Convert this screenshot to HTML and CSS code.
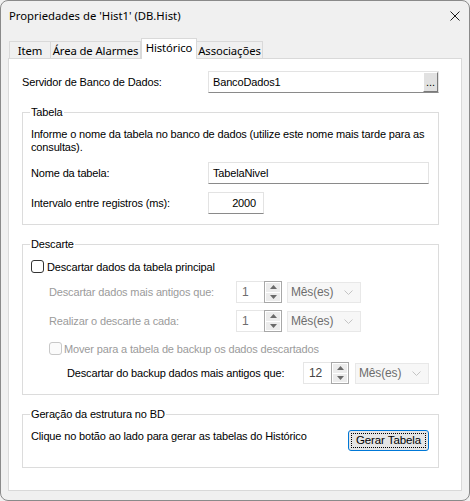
FILE: index.html
```html
<!DOCTYPE html>
<html lang="pt-BR">
<head>
  <meta charset="UTF-8" />
  <meta name="viewport" content="width=device-width, initial-scale=1.0"/>
  <title>Propriedades de 'Hist1' (DB.Hist)</title>
  <link rel="stylesheet" href="styles.css">
</head>
<body>
  <div class="window">
    <div class="titlebar">
      <span class="title">Propriedades de 'Hist1' (DB.Hist)</span>
      <svg class="close" width="10" height="10" viewBox="0 0 10 10"><path d="M0.5 0.5 L9.5 9.5 M9.5 0.5 L0.5 9.5" stroke="#1b1b1b" stroke-width="1" fill="none"/></svg>
    </div>

    <div class="tabs">
      <div class="tab t-item">Item</div>
      <div class="tab t-area">Área de Alarmes</div>
      <div class="tab t-hist active">Histórico</div>
      <div class="tab t-assoc">Associações</div>
    </div>

    <div class="panel">
      <div class="row server">
        <span class="lbl w-server">Servidor de Banco de Dados:</span>
        <div class="textbox fill">
          <span class="tb-text">BancoDados1</span>
          <span class="dots">...</span>
        </div>
      </div>

      <fieldset class="group g-tabela">
        <legend>Tabela</legend>
        <p class="hint">Informe o nome da tabela no banco de dados (utilize este nome mais tarde para as consultas).</p>
        <div class="row field">
          <span class="lbl w-tab">Nome da tabela:</span>
          <div class="textbox fill"><span class="tb-text">TabelaNivel</span></div>
        </div>
        <div class="row field">
          <span class="lbl w-tab">Intervalo entre registros (ms):</span>
          <div class="textbox small right"><span class="tb-text">2000</span></div>
        </div>
      </fieldset>

      <fieldset class="group g-descarte">
        <legend>Descarte</legend>
        <div class="check-row first">
          <span class="checkbox"></span>
          <span>Descartar dados da tabela principal</span>
        </div>
        <div class="row field r-ant">
          <span class="lbl w-ind disabled">Descartar dados mais antigos que:</span>
          <div class="spin">
            <span class="spin-val">1</span>
            <div class="spin-btns">
              <span class="sb"><svg width="7" height="4" viewBox="0 0 7 4"><path d="M0 4 L3.5 0 L7 4 Z" fill="#6a6a6a"/></svg></span>
              <span class="sb"><svg width="7" height="4" viewBox="0 0 7 4"><path d="M0 0 L3.5 4 L7 0 Z" fill="#6a6a6a"/></svg></span>
            </div>
          </div>
          <div class="combo">
            <span>Mês(es)</span>
            <svg width="9" height="5" viewBox="0 0 9 5"><path d="M0.5 0.5 L4.5 4.5 L8.5 0.5" stroke="#c4c4c4" fill="none"/></svg>
          </div>
        </div>
        <div class="row field r-cada">
          <span class="lbl w-ind disabled">Realizar o descarte a cada:</span>
          <div class="spin">
            <span class="spin-val">1</span>
            <div class="spin-btns">
              <span class="sb"><svg width="7" height="4" viewBox="0 0 7 4"><path d="M0 4 L3.5 0 L7 4 Z" fill="#6a6a6a"/></svg></span>
              <span class="sb"><svg width="7" height="4" viewBox="0 0 7 4"><path d="M0 0 L3.5 4 L7 0 Z" fill="#6a6a6a"/></svg></span>
            </div>
          </div>
          <div class="combo">
            <span>Mês(es)</span>
            <svg width="9" height="5" viewBox="0 0 9 5"><path d="M0.5 0.5 L4.5 4.5 L8.5 0.5" stroke="#c4c4c4" fill="none"/></svg>
          </div>
        </div>
        <div class="check-row indent">
          <span class="checkbox off"></span>
          <span class="disabled">Mover para a tabela de backup os dados descartados</span>
        </div>
        <div class="row field r-bkp">
          <span class="lbl w-bkp">Descartar do backup dados mais antigos que:</span>
          <div class="spin">
            <span class="spin-val">12</span>
            <div class="spin-btns">
              <span class="sb"><svg width="7" height="4" viewBox="0 0 7 4"><path d="M0 4 L3.5 0 L7 4 Z" fill="#6a6a6a"/></svg></span>
              <span class="sb"><svg width="7" height="4" viewBox="0 0 7 4"><path d="M0 0 L3.5 4 L7 0 Z" fill="#6a6a6a"/></svg></span>
            </div>
          </div>
          <div class="combo wide-gap">
            <span>Mês(es)</span>
            <svg width="9" height="5" viewBox="0 0 9 5"><path d="M0.5 0.5 L4.5 4.5 L8.5 0.5" stroke="#c4c4c4" fill="none"/></svg>
          </div>
        </div>
      </fieldset>

      <fieldset class="group g-gera">
        <legend>Geração da estrutura no BD</legend>
        <div class="gera-row">
          <span>Clique no botão ao lado para gerar as tabelas do Histórico</span>
          <button class="btn"><span class="focus">Gerar Tabela</span></button>
        </div>
      </fieldset>
    </div>
  </div>
</body>
</html>
```

FILE: styles.css
```css
body {
  margin: 0;
  background: #f0f0f0;
  font-family: "Liberation Sans", Arial, sans-serif;
  font-size: 11px;
  letter-spacing: -0.15px;
  color: #000;
}
.window {
  width: 470px;
  height: 501px;
  box-sizing: border-box;
  border: 1px solid #8a8a8a;
  border-radius: 8px;
  background: #f0f0f0;
  overflow: hidden;
}
.titlebar {
  height: 29px;
  display: flex;
  align-items: center;
  padding: 0 10px 0 8px;
  font-family: "Noto Sans", sans-serif;
  font-size: 11.3px;
  letter-spacing: 0;
}
.title {
  flex: 1;
}
.close {
  margin-right: -1px;
}

/* tabs */
.tabs {
  display: flex;
  align-items: flex-end;
  height: 20px;
  padding: 8px 0 0 8px;
  font-family: "Noto Sans", sans-serif;
  font-size: 11.3px;
  letter-spacing: -0.1px;
  white-space: nowrap;
}
.tab {
  box-sizing: border-box;
  height: 17px;
  border: 1px solid #d9d9d9;
  border-bottom: none;
  background: #f0f0f0;
  text-align: center;
  line-height: 17px;
  margin-left: -1px;
}
.t-item { width: 42px; margin-left: 0; }
.t-area { width: 91px; }
.t-hist { width: 56px; margin-left: 0; }
.t-assoc { width: 67px; }
.tab.active {
  height: 21px;
  line-height: 18px;
  margin-bottom: -1px;
  background: #fff;
  position: relative;
  z-index: 1;
}

/* panel */
.panel {
  box-sizing: border-box;
  height: 433px;
  margin: 0 7px;
  border: 1px solid #d9d9d9;
  background: #fff;
  padding: 12px 22px 0 13px;
}
.row {
  display: flex;
  align-items: center;
  height: 22px;
}
.lbl {
  flex: none;
}
.w-server { width: 186px; }
.w-tab { width: 177px; }
.w-ind { width: 187px; padding-left: 18px; }
.w-bkp { width: 236px; padding-left: 36px; }
.disabled {
  color: #9b9b9b;
}

.textbox {
  box-sizing: border-box;
  height: 22px;
  border: 1px solid #e3e3e3;
  border-bottom-color: #8a8a8a;
  background: #fff;
  display: flex;
  align-items: center;
  padding-left: 4px;
}
.textbox.fill { flex: 1; }
.textbox.small { width: 56px; }
.textbox.right {
  justify-content: flex-end;
  padding-right: 7px;
}
.tb-text {
  flex: 1;
}
.textbox.right .tb-text { flex: none; }
.dots {
  box-sizing: border-box;
  width: 15px;
  height: 20px;
  background: #e1e1e1;
  border: 1px solid #fff;
  border-right-color: #7a7a7a;
  border-bottom-color: #7a7a7a;
  text-align: center;
  line-height: 18px;
  font-size: 11px;
  letter-spacing: 0;
}

/* group boxes */
.group {
  margin: 12px 0 0;
  border: 1px solid #dcdcdc;
  padding: 9px 9px 10px 8px;
}
.group legend {
  padding: 0 1px;
  margin-left: -1px;
  line-height: 14px;
}
.hint {
  margin: 0;
  line-height: 13px;
}
.field { margin-top: 8px; }

.g-descarte { padding-top: 8px; }
.check-row {
  display: flex;
  align-items: center;
  height: 15px;
  gap: 3px;
}
.check-row.indent {
  margin-top: 9px;
  padding-left: 18px;
  gap: 2px;
}
.checkbox {
  box-sizing: border-box;
  width: 13px;
  height: 13px;
  border: 1px solid #333;
  border-radius: 3px;
  background: #fff;
}
.checkbox.off {
  border-color: #c8c8c8;
  background: #fbfbfb;
}
.r-ant { margin-top: 7px; }
.r-cada { margin-top: 7px; }
.r-bkp { margin-top: 6px; }

.spin {
  display: flex;
  height: 22px;
  width: 46px;
  flex: none;
}
.spin-val {
  box-sizing: border-box;
  width: 28px;
  border: 1px solid #e6e6e6;
  border-right: none;
  padding-left: 5px;
  line-height: 20px;
  color: #6d6d6d;
  font-size: 12px;
}
.r-bkp .spin-val { color: #444; }
.spin-btns {
  box-sizing: border-box;
  width: 18px;
  border: 1px solid #a8a8a8;
  display: flex;
  flex-direction: column;
  background: #fff;
}
.sb {
  flex: 1;
  margin: 1px;
  background: #ececec;
  display: flex;
  align-items: center;
  justify-content: center;
}
.sb + .sb { margin-top: 0; }

.combo {
  box-sizing: border-box;
  width: 74px;
  height: 21px;
  margin-left: 5px;
  border: 1px solid #e8e8e8;
  background: #f7f7f7;
  display: flex;
  align-items: center;
  justify-content: space-between;
  padding: 0 7px 0 3px;
  color: #6d6d6d;
  font-size: 12px;
}
.combo.wide-gap { margin-left: 6px; }

/* geração */
.g-gera { padding: 8px 9px 16px 8px; }
.gera-row {
  display: flex;
  justify-content: space-between;
  align-items: flex-start;
  line-height: 14px;
}
.btn {
  box-sizing: border-box;
  width: 81px;
  height: 21px;
  margin: 1px 0 0;
  padding: 2px;
  border: 1px solid #0078d7;
  border-radius: 3px;
  background: #e5e5e5;
  font-family: inherit;
  font-size: 11.5px;
  letter-spacing: -0.1px;
  color: #000;
}
.focus {
  display: block;
  height: 100%;
  box-sizing: border-box;
  border: 1px dotted #000;
  line-height: 13px;
}
```
